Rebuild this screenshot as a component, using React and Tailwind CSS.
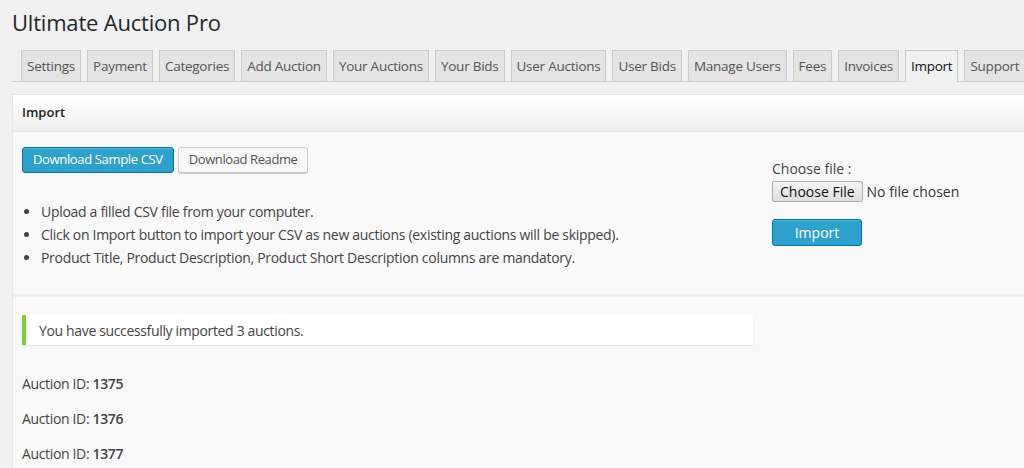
import React from "react";

const tabs = [
  "Settings",
  "Payment",
  "Categories",
  "Add Auction",
  "Your Auctions",
  "Your Bids",
  "User Auctions",
  "User Bids",
  "Manage Users",
  "Fees",
  "Invoices",
  "Import",
  "Support",
];

const App = () => {
  return (
    <div
      className="min-h-[468px] bg-[#f1f1f1] text-[#444] overflow-hidden"
      style={{ fontFamily: '"Open Sans", sans-serif' }}
    >
      <div className="pl-3">
        <h1 className="pt-[5px] text-[22px] tracking-[-0.2px] leading-[34px] text-[#23282d] font-normal">
          Ultimate Auction Pro
        </h1>

        {/* tabs */}
        <div className="mt-[11px] flex items-end gap-[6px] pl-[9px] border-b border-[#ccc] h-[32px] w-[1100px]">
          {tabs.map((t) => {
            const active = t === "Import";
            return (
              <div
                key={t}
                className={
                  active
                    ? "h-[32px] -mb-px px-[5px] flex items-center border border-b-0 border-[#ccc] bg-[#f1f1f1] text-[13.5px] tracking-[-0.25px] text-[#111] whitespace-nowrap"
                    : "h-[31px] px-[5px] flex items-center border border-b-0 border-[#ccc] bg-[#e4e4e4] text-[13.5px] tracking-[-0.25px] text-[#555] whitespace-nowrap"
                }
              >
                {t}
              </div>
            );
          })}
        </div>

        {/* panel */}
        <div className="mt-[12px] w-[1100px] border border-[#e5e5e5] bg-[#f9f9f9] shadow-[0_1px_1px_rgba(0,0,0,0.04)]">
          <div className="h-[37px] flex items-center px-[9px] border-b border-[#e5e5e5] bg-gradient-to-b from-[#ffffff] to-[#f0f0f0] text-[13px] font-semibold text-[#222]">
            Import
          </div>

          <div className="flex border-b-[3px] border-[#eeeeee] h-[165px]">
            <div className="w-[759px] pl-[9px] pt-[15px]">
              <div className="flex gap-[4px]">
                <button className="h-[26px] px-[10px] rounded-[3px] border border-[#0074a2] bg-[#2ea2cc] text-white text-[13px] tracking-[-0.35px] shadow-[inset_0_1px_0_rgba(120,200,230,0.5)]">
                  Download Sample CSV
                </button>
                <button className="h-[26px] px-[10px] rounded-[3px] border border-[#ccc] bg-[#f7f7f7] text-[#555] text-[13px] tracking-[-0.4px] shadow-[0_1px_0_#ccc]">
                  Download Readme
                </button>
              </div>
              <ul className="mt-[27px] list-disc pl-[19px] text-[14px] tracking-[-0.3px] leading-[23px] text-[#444]">
                <li>Upload a filled CSV file from your computer.</li>
                <li>
                  Click on Import button to import your CSV as new auctions
                  (existing auctions will be skipped).
                </li>
                <li>
                  Product Title, Product Description, Product Short Description
                  columns are mandatory.
                </li>
              </ul>
            </div>
            <div className="pt-[27px]">
              <div className="text-[14px] leading-[20px] text-[#444]">
                Choose file :
              </div>
              <div className="mt-[2px] flex items-center gap-[4px]">
                <span className="h-[21px] px-[7px] flex items-center border border-[#adadad] rounded-[2px] bg-gradient-to-b from-[#f5f5f5] to-[#dedede] text-[14px] text-[#111]">
                  Choose File
                </span>
                <span className="text-[14px] text-[#333]">No file chosen</span>
              </div>
              <button className="mt-[17px] w-[90px] h-[27px] rounded-[3px] border border-[#0074a2] bg-[#2ea2cc] text-white text-[14px] shadow-[inset_0_1px_0_rgba(120,200,230,0.5)]">
                Import
              </button>
            </div>
          </div>

          <div className="pl-[9px] pt-[18px] pb-[20px]">
            <div className="w-[731px] h-[30px] flex items-center bg-white border-l-4 border-[#7ad03a] pl-[13px] shadow-[0_1px_1px_rgba(0,0,0,0.08)] text-[14px] tracking-[-0.35px] text-[#444]">
              You have successfully imported 3 auctions.
            </div>
            <div className="mt-[28px] flex flex-col gap-[13px] text-[14px] tracking-[-0.35px] leading-[22px] text-[#444]">
              <p>
                Auction ID: <b className="font-semibold">1375</b>
              </p>
              <p>
                Auction ID: <b className="font-semibold">1376</b>
              </p>
              <p>
                Auction ID: <b className="font-semibold">1377</b>
              </p>
            </div>
          </div>
        </div>
      </div>
    </div>
  );
};

export default App;
